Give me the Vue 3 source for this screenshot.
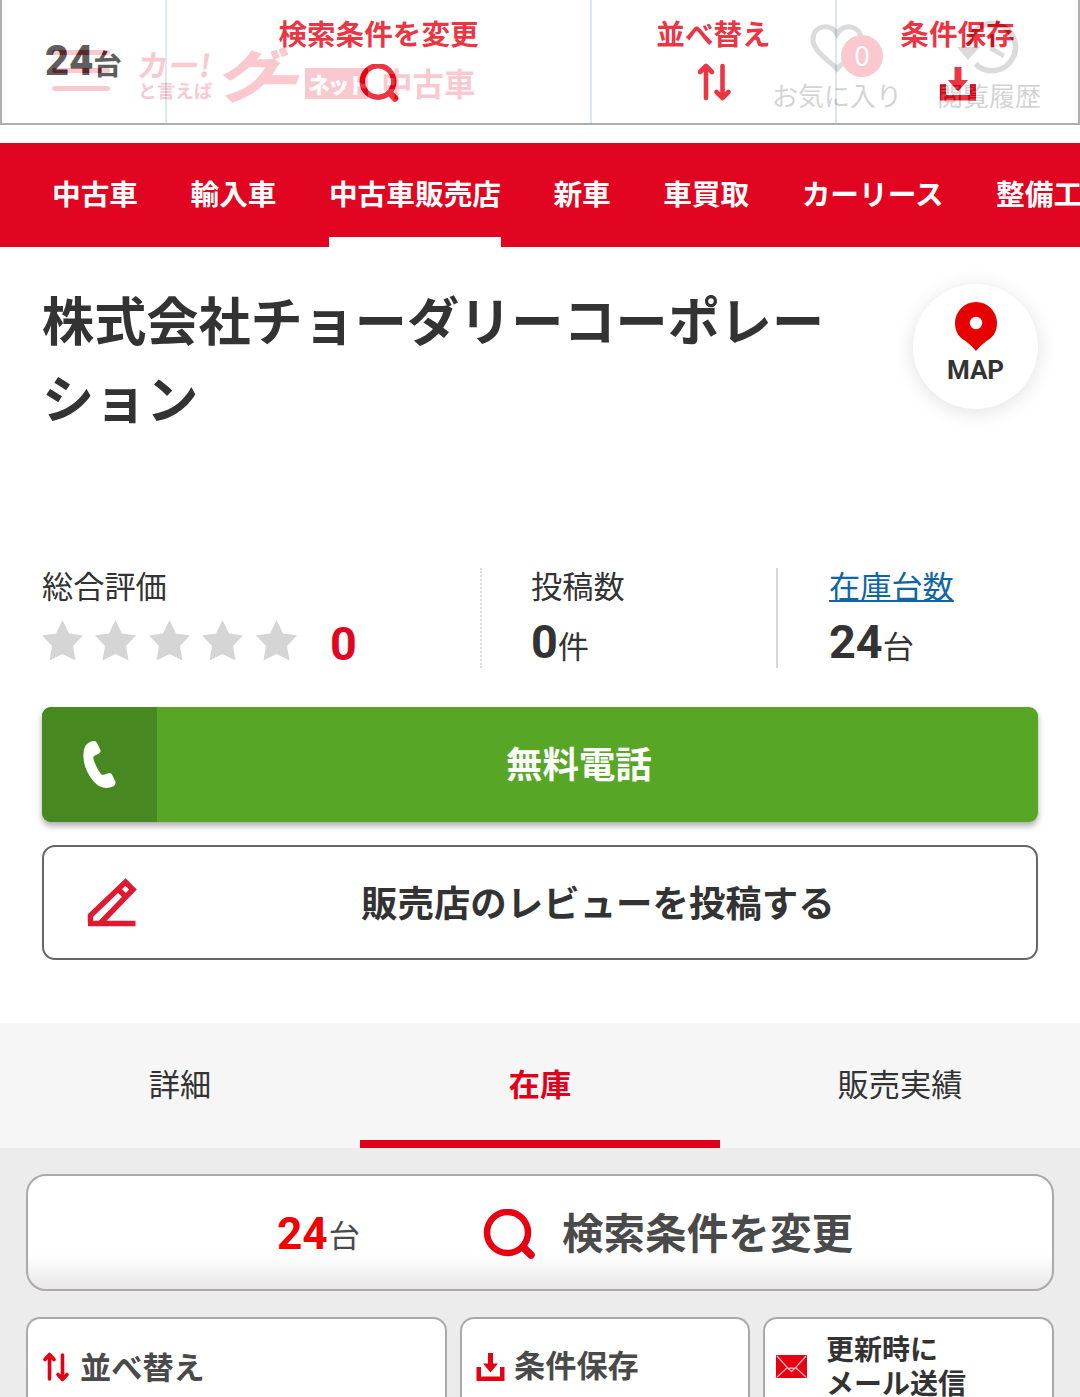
<script setup>
const navItems = ['中古車', '輸入車', '中古車販売店', '新車', '車買取', 'カーリース', '整備工場']
const activeNav = '中古車販売店'
const tabs = ['詳細', '在庫', '販売実績']
const activeTab = '在庫'
</script>

<template>
  <div class="page">
    <header class="top">
      <div class="site">
        <div class="burger"><i></i><i></i><i></i></div>
        <div class="brand">
          <div class="catch"><b class="c1">カー!</b><b class="c2">と言えば</b></div>
          <div class="goo"><span class="g1">グ</span><span class="g2">ー</span></div>
          <div class="net">ネット</div>
          <div class="used">中古車</div>
        </div>
        <div class="tool fav">
          <svg width="54" height="49" viewBox="0 0 54 49"><path d="M27 45C21 38 3 28 3 15C3 2 20-2 27 10C34-2 51 2 51 15C51 28 33 38 27 45Z" fill="none" stroke="#555" stroke-width="5" /></svg>
          <span>お気に入り</span>
          <em>0</em>
        </div>
        <div class="tool history">
          <svg width="66" height="56" viewBox="0 0 66 56"><path d="M12.500 27A23.500 23.500 0 1 1 19.500 45" fill="none" stroke="#555" stroke-width="5.500" /><path d="M1 28H24L12 41Z" fill="#555" /><path d="M36 15V30L48 37" fill="none" stroke="#555" stroke-width="4.500" /></svg>
          <span>閲覧履歴</span>
        </div>
      </div>
      <div class="sticky">
        <div class="cell count"><b>24</b><span>台</span></div>
        <div class="cell"><span>検索条件を変更</span>
          <svg class="lens" width="42" height="40" viewBox="0 0 42 40"><circle cx="20" cy="17.500" r="15.700" fill="none" stroke="#e60012" stroke-width="5.500" /><path d="M32 29L37 34.500" stroke="#e60012" stroke-width="6.500" stroke-linecap="round" /></svg>
        </div>
        <div class="cell"><span>並べ替え</span>
          <svg width="36" height="40" viewBox="0 0 36 40"><path d="M10 36V4M4 10L10 4L16 10M26.500 4V36M20.500 30L26.500 36L32.500 30" fill="none" stroke="#e60012" stroke-width="4.600" stroke-linecap="round" stroke-linejoin="round" /></svg>
        </div>
        <div class="cell"><span>条件保存</span>
          <svg class="tray" width="36" height="40" viewBox="0 0 36 40"><path d="M14.500 4H21.500V17H28L18 28.500L8 17H14.500ZM0 21H6V32H30V21H36V37.500H0Z" fill="#e60012" /></svg>
        </div>
      </div>
    </header>

    <nav class="nav">
      <a v-for="item in navItems" :key="item" :class="{ on: item === activeNav }">{{ item }}</a>
    </nav>

    <section class="shop">
      <div class="head">
        <h1>株式会社チョーダリーコーポレーション</h1>
        <a class="map">
          <svg width="42" height="50" viewBox="0 0 42 50"><path d="M21 0A21 21 0 0 1 42 21C42 31 37 36 31.500 39Q26 43 21 49Q16 43 10.500 39C5 36 0 31 0 21A21 21 0 0 1 21 0Z" fill="#e60000" /><circle cx="21" cy="21" r="6.200" fill="#fff" /></svg>
          <span>MAP</span>
        </a>
      </div>

      <div class="stats">
        <div class="stat rating">
          <span class="label">総合評価</span>
          <div class="stars">
            <svg v-for="n in 5" :key="n" width="41" height="41" viewBox="0 0 41 41"><path d="M20.500 0L27 13.500L41 15.500L31 26L33.500 40.500L20.500 34L7.500 40.500L10 26L0 15.500L14 13.500Z" fill="#d5d5d5" /></svg>
            <b>0</b>
          </div>
        </div>
        <div class="stat posts"><span class="label">投稿数</span><div class="value"><b>0</b>件</div></div>
        <div class="stat stock"><a class="label">在庫台数</a><div class="value"><b>24</b>台</div></div>
      </div>

      <a class="call">
        <span class="phone"><svg width="34" height="49" viewBox="0 0 34 49"><path d="M3 5Q7 1 11 1Q13 1 14 3L17.500 10Q18 12 16 13.500L12 15.500C10 16.500 10 18 11 21C13 26 15.500 31 18 34C19 35 20 35 21.500 34.500L26 33Q28 32.500 29 34.500L32.500 42Q33 45 30 46.500Q23 49.500 16 46C11 43 6 36 3 29C-.5 20-.5 10 3 5Z" fill="#fff" /></svg></span>
        <span class="text">無料電話</span>
      </a>
      <a class="review">
        <svg width="50" height="50" viewBox="0 0 50 50"><path d="M3.500 45.500V37.500L38.500 4L46 11.500L13 45.500M31 11L39 19M1 45.500H48.500" fill="none" stroke="#e01830" stroke-width="5.400" /></svg>
        <span class="text">販売店のレビューを投稿する</span>
      </a>
    </section>

    <div class="tabs">
      <a v-for="tab in tabs" :key="tab" :class="{ on: tab === activeTab }">{{ tab }}</a>
    </div>

    <section class="list">
      <a class="search">
        <b class="num">24</b><span class="unit">台</span>
        <svg width="54" height="52" viewBox="0 0 54 52"><circle cx="24.500" cy="23.500" r="20.500" fill="none" stroke="#e60012" stroke-width="6.500" /><path d="M41 39L48 46" stroke="#e60012" stroke-width="7.500" stroke-linecap="round" /></svg>
        <span class="text">検索条件を変更</span>
      </a>
      <div class="actions">
        <a class="sort">
          <svg width="28" height="30" viewBox="0 0 28 30"><path d="M7.500 27V3M3 7.500L7.500 2.500L12 7.500M20.500 3V27M16 22.500L20.500 27.500L25 22.500" fill="none" stroke="#e60012" stroke-width="3.600" stroke-linecap="round" stroke-linejoin="round" /></svg>
          <span>並べ替え</span>
        </a>
        <a class="save">
          <svg width="29" height="28" viewBox="0 0 28 28"><path d="M11.500 0H16.500V10.500H21.500L14 19.500L6.500 10.500H11.500ZM0 14H4.500V23.500H23.500V14H28V28H0Z" fill="#e60012" /></svg>
          <span>条件保存</span>
        </a>
        <a class="mail">
          <svg width="31" height="23" viewBox="0 0 31 23"><rect width="31" height="23" rx="1" fill="#e60012" /><path d="M1 1L12.500 14Q15.500 12 18.500 14L30 1M1 22L11.500 12.500M30 22L19.500 12.500M11 12L15.500 16.500L20 12" fill="none" stroke="#f8b4b8" stroke-width="1.300" /></svg>
          <span>更新時に<br>メール送信</span>
        </a>
      </div>
    </section>
  </div>
</template>

<style>
body { margin: 0; overflow: hidden; }
</style>

<style scoped>
* { box-sizing: border-box; }
.page { width: 1080px; height: 1397px; overflow: hidden; background: #fff; color: #333; font-family: Roboto, "Noto Sans CJK JP", sans-serif; }
svg { display: block; flex: none; }
.top { position: relative; height: 143px; }
.site { display: flex; height: 125px; }
.burger { width: 58px; margin: 50px 0 0 52px; display: flex; flex-direction: column; gap: 13px; flex: none; }
.burger i { height: 5px; border-radius: 3px; background: #e60012; }
.brand { display: flex; width: 337px; margin-left: 28px; color: #e60020; font-family: "Noto Sans CJK JP", sans-serif; flex: none; }
.catch { width: 80px; padding-top: 48px; display: flex; flex-direction: column; flex: none; }
.c1 { font-size: 31px; line-height: 31px; transform: skewX(-8deg); white-space: nowrap; }
.c2 { font-size: 18.700px; line-height: 22px; white-space: nowrap; }
.goo { display: flex; width: 87px; margin-top: 42px; font-size: 57px; font-weight: 900; line-height: 60px; flex: none; }
.g1 { width: 50px; transform: translateX(1px) skewX(-12deg) scaleX(1.120); transform-origin: left center; }
.g2 { width: 37px; font-size: 50px; line-height: 70px; transform: translateX(-7px) skewX(-20deg) scaleX(.78); transform-origin: left center; white-space: nowrap; }
.net { width: 63px; height: 31px; margin-top: 68px; padding-left: 3px; background: #e60020; color: #fff; font-size: 22px; font-weight: 900; line-height: 30px; letter-spacing: -2.500px; white-space: nowrap; flex: none; }
.used { margin: 64px 0 0 13px; font-size: 31.500px; font-weight: 700; line-height: 36px; white-space: nowrap; }
.tool { position: relative; display: flex; flex-direction: column; align-items: center; color: #333; font-size: 26px; line-height: 36px; font-weight: 400; white-space: nowrap; font-family: "Noto Sans CJK JP", sans-serif; }
.fav { width: 130px; margin-left: 297px; padding-top: 24px; }
.fav svg { margin-bottom: 4px; }
.fav em { position: absolute; left: 69px; top: 35px; width: 42px; height: 42px; border-radius: 50%; background: #e60020; color: #fff; font-style: normal; font-size: 28px; line-height: 39px; text-align: center; font-weight: 400; }
.history { width: 104px; margin-left: 35px; padding-top: 19px; }
.history svg { margin-bottom: 2px; }
.sticky { position: absolute; inset: 0 0 auto 0; height: 125px; display: grid; grid-template-columns: 163px 425px 245px 1fr; background: #fff; border: 2px solid #999; border-top: 0; opacity: .79; }
.cell { display: flex; flex-direction: column; align-items: center; padding-top: 14px; border-left: 2px solid #cfe4ef; color: #e60012; font-size: 28.600px; line-height: 43px; font-weight: 700; }
.cell svg { margin-top: 5px; }
.cell .lens { margin-top: 7px; }
.cell .tray { margin-top: 6px; }
.count { flex-direction: row; align-items: baseline; justify-content: center; border-left: 0; color: #333; padding-top: 36px; line-height: 50px; }
.count b { font-size: 41.600px; }
.nav { height: 104px; display: flex; gap: 52.400px; padding-left: 52px; background: #e10521; overflow: hidden; }
.nav a { flex: none; color: #fff; font-size: 28.700px; font-weight: 700; line-height: 105px; height: 104px; }
.nav .on { border-bottom: 10px solid #fff; }
.shop { height: 776px; padding: 35px 42px 0; }
.head { display: flex; justify-content: space-between; height: 286px; }
h1 { margin: 3px 0 0; width: 800px; font-size: 52.150px; line-height: 78px; font-weight: 700; word-break: break-all; }
.map { width: 125px; height: 125px; margin-top: 2px; border-radius: 50%; box-shadow: 0 3px 20px rgba(0,0,0,.12); display: flex; flex-direction: column; align-items: center; padding-top: 18px; font-size: 26px; line-height: 30px; font-weight: 700; }
.map span { margin-top: 3px; }
.stats { display: flex; height: 100px; }
.stat { flex: none; font-size: 31.200px; }
.label { display: block; height: 38px; line-height: 39px; }
.rating { width: 440px; border-right: 2px dotted #ddd; }
.posts { width: 296px; padding-left: 49px; border-right: 2px solid #d8d8d8; }
.stock { padding-left: 51px; }
.stock .label { color: #1065a5; text-decoration: underline; text-decoration-thickness: 2px; text-underline-offset: 2px; }
.value { line-height: 72px; font-size: 31.200px; }
.value b, .stars b { font-size: 46.800px; }
.stars { display: flex; gap: 12.400px; padding-top: 14px; }
.stars b { margin-left: 21px; color: #e10521; line-height: 49px; }
.call, .review { display: flex; align-items: center; height: 115px; font-size: 36.450px; font-weight: 700; }
.call { margin-top: 39px; border-radius: 9px; background: #58a626; color: #fff; box-shadow: 0 4px 6px rgba(0,0,0,.32); }
.phone { width: 115px; height: 115px; display: flex; align-items: center; justify-content: center; background: #478821; border-radius: 9px 0 0 9px; }
.call .text { margin-left: 349px; padding-bottom: 6px; }
.review { margin-top: 23px; border: 2px solid #666; border-radius: 13px; padding-left: 43px; }
.review .text { margin-left: 224px; padding-bottom: 4px; }
.tabs { display: grid; grid-template-columns: 1fr 1fr 1fr; height: 125px; background: #f6f6f6; font-size: 31.200px; text-align: center; line-height: 125px; }
.tabs a { height: 125px; }
.tabs .on { color: #e10019; font-weight: 700; border-bottom: 8px solid #e10019; }
.list { height: 249px; padding: 26px 26px 0; background: #ececec; }
.search { display: flex; align-items: center; height: 117px; padding-left: 249px; border: 2px solid #aaa; border-radius: 20px; background: linear-gradient(#fff 0 69%, #e9e7e8); color: #4a4a4a; }
.num { font-size: 44.200px; color: #f00000; padding-top: 2px; }
.unit { font-size: 31.200px; padding-top: 2px; margin-left: 1px; }
.search svg { margin: 4px 0 0 123px; }
.search .text { margin-left: 25px; padding-bottom: 3px; font-size: 41.600px; font-weight: 700; }
.actions { display: grid; grid-template-columns: 421px 290px 291px; gap: 13px; margin-top: 26px; }
.actions a { display: flex; align-items: center; height: 101px; border: 2px solid #aaa; border-bottom: 0; border-radius: 14px 14px 0 0; background: #fff; color: #4a4a4a; font-weight: 700; font-size: 31.200px; line-height: 36px; }
.actions svg { margin-bottom: 4px; }
.sort { padding-left: 14px; }
.sort span { margin-left: 10px; }
.save { padding-left: 14px; }
.actions .save span { margin-left: 9px; padding-bottom: 3px; }
.actions .mail { padding-left: 11px; color: #333; font-size: 28px; line-height: 34px; }
.mail span { margin-left: 19px; padding-bottom: 2px; white-space: nowrap; }
</style>
